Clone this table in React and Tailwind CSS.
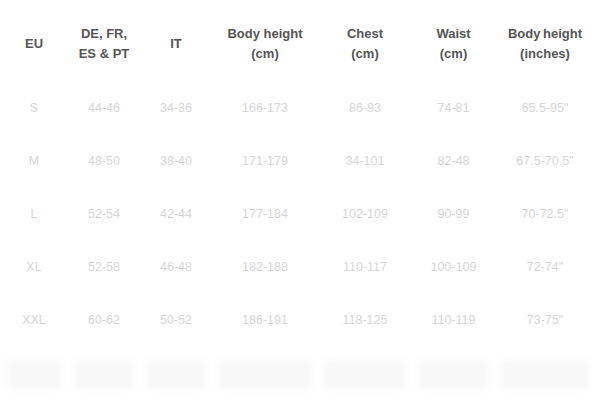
import React from 'react';

const cols = ['w-[68px]', 'w-[72px]', 'w-[72px]', 'w-[106px]', 'w-[94px]', 'w-[83px]', 'w-[100px]'];

const headers = [
    ['EU'],
    ['DE, FR,', 'ES & PT'],
    ['IT'],
    ['Body height', '(cm)'],
    ['Chest', '(cm)'],
    ['Waist', '(cm)'],
    ['Body\u2009height', '(inches)'],
];

const rows = [
    ['S', '44-46', '34-36', '166-173', '86-93', '74-81', '65.5-95"'],
    ['M', '48-50', '38-40', '171-179', '34-101', '82-48', '67.5-70.5"'],
    ['L', '52-54', '42-44', '177-184', '102-109', '90-99', '70-72.5"'],
    ['XL', '52-58', '46-48', '182-188', '110-117', '100-109', '72-74"'],
    ['XXL', '60-62', '50-52', '186-191', '118-125', '110-119', '73-75"'],
];

export default function App() {
    return (
        <div className="w-[600px] h-[418px] bg-white overflow-hidden font-['Liberation_Sans',Arial,sans-serif]">
            {/* header */}
            <div className="flex h-[81px] pt-[6px]">
                {headers.map((h, i) => (
                    <div key={i} className={`${cols[i]} flex flex-col items-center justify-center text-[13px] leading-[20px] font-bold text-[#555]`}>
                        {h.map((line, j) => (
                            <span key={j}>{line}</span>
                        ))}
                    </div>
                ))}
            </div>
            {rows.map((r, ri) => (
                <div key={ri} className="flex h-[53px] pt-[2px]">
                    {r.map((c, ci) => (
                        <div key={ci} className={`${cols[ci]} flex items-center justify-center text-[12.5px] text-[#d6d6d6]`}>
                            {c}
                        </div>
                    ))}
                </div>
            ))}
            {/* faded last row */}
            <div className="flex h-[53px] pt-[4px] blur-[3px]">
                {cols.map((w, i) => (
                    <div key={i} className={`${w} flex items-center justify-center px-[6px]`}>
                        <div className="w-full h-[30px] bg-[#f8f8f8]"></div>
                    </div>
                ))}
            </div>
        </div>
    );
}
